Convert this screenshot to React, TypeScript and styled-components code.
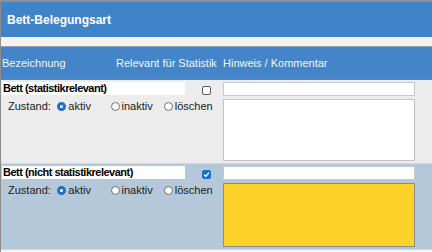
import React, { useState } from 'react';
import styled, { createGlobalStyle } from 'styled-components';

const GlobalStyle = createGlobalStyle`
	html, body {
		margin: 0;
		padding: 0;
		background: #f4f3f2;
		font-family: 'Liberation Sans', Arial, sans-serif;
	}
`;

const Page = styled.div`
	width: 432px;
	height: 252px;
	overflow: hidden;
	border-left: 1px solid #8c8c8c;
	border-top: 2px solid #8a8f95;
	box-sizing: border-box;
	background: #f4f3f2;
`;

const TitleBar = styled.div`
	height: 35px;
	background: #3f84c9;
	color: #fff;
	font-weight: bold;
	font-size: 12px;
	display: flex;
	align-items: center;
	padding-left: 6px;
`;

const Spacer = styled.div`
	height: 9px;
	border-bottom: 1px solid #9aa0a6;
`;

const HeaderRow = styled.div`
	height: 32px;
	background: #4385c8;
	color: #f2f6fb;
	font-size: 11px;
	display: grid;
	grid-template-columns: 114px 98px 1fr;
	align-items: center;
	padding-left: 1px;
	border-bottom: 1px solid #5a86b0;
`;

const HeadCell = styled.div<{ $right?: boolean; $indent?: number }>`
	text-align: ${(p) => (p.$right ? 'right' : 'left')};
	padding-left: ${(p) => p.$indent ?? 0}px;
	white-space: nowrap;
`;

const Row = styled.div<{ $tint: string; $height: number }>`
	height: ${(p) => p.$height}px;
	background: ${(p) => p.$tint};
	display: grid;
	grid-template-columns: 183px 38px 192px;
	grid-template-rows: 14px 1fr;
	row-gap: 3px;
	padding: 2px 0 0 1px;
	box-sizing: border-box;
	border-bottom: 1px solid #d6d6d6;
`;

const NameInput = styled.input`
	all: unset;
	box-sizing: border-box;
	height: 13px;
	background: #fff;
	font-family: 'Liberation Sans', Arial, sans-serif;
	font-weight: bold;
	font-size: 11px;
	letter-spacing: -0.5px;
	color: #000;
	line-height: 13px;
	padding-left: 1px;
`;

const CheckCell = styled.div`
	display: flex;
	justify-content: flex-end;
	align-items: center;
	padding-right: 12px;
	padding-top: 3px;
`;

const Box = styled.span<{ $on: boolean }>`
	width: 9px;
	height: 9px;
	border-radius: 2px;
	box-sizing: border-box;
	border: 1px solid ${(p) => (p.$on ? '#1e6fc9' : '#5a5a5a')};
	background: ${(p) => (p.$on ? '#1e6fc9' : '#fff')};
	display: flex;
	align-items: center;
	justify-content: center;
`;

const CommentInput = styled.div`
	height: 14px;
	box-sizing: border-box;
	background: #fff;
	border: 1px solid #c8c8c8;
`;

const StateLine = styled.div`
	grid-column: 1 / 3;
	display: flex;
	align-items: flex-start;
	font-size: 11px;
	color: #1a1a1a;
	padding-left: 6px;
	padding-top: 1px;
	height: 14px;
`;

const Label = styled.span`
	width: 50px;
`;

const Option = styled.label<{ $w: number }>`
	display: flex;
	align-items: center;
	width: ${(p) => p.$w}px;
	gap: 2px;
`;

const Dot = styled.span<{ $on: boolean }>`
	width: 9px;
	height: 9px;
	border-radius: 50%;
	box-sizing: border-box;
	border: ${(p) => (p.$on ? '3px solid #1f6fc6' : '1px solid #6e6e6e')};
	background: #fff;
`;

const NoteArea = styled.div<{ $fill: string; $edge: string }>`
	grid-column: 3;
	background: ${(p) => p.$fill};
	border: 1px solid ${(p) => p.$edge};
	box-sizing: border-box;
	margin-bottom: 2px;
`;

const Bottom = styled.div`
	background: #f4f3f2;
	height: 4px;
`;

interface Entry {
	name: string;
	relevant: boolean;
	tint: string;
	height: number;
	note: string;
	noteEdge: string;
}

const entries: Entry[] = [
	{ name: 'Bett (statistikrelevant)', relevant: false, tint: '#ececec', height: 84, note: '#fff', noteEdge: '#c4c4c4' },
	{ name: 'Bett (nicht statistikrelevant)', relevant: true, tint: '#b5c8d9', height: 86, note: '#fdd32b', noteEdge: '#8a8a8a' },
];

const Check = () => (
	<svg width="7" height="7" viewBox="0 0 7 7">
		<path d="M1 3.6 L2.8 5.3 L6 1.6" stroke="#fff" strokeWidth="1.3" fill="none" />
	</svg>
);

const EntryRow: React.FC<{ e: Entry }> = ({ e }) => {
	const [state, setState] = useState('aktiv');
	return (
		<Row $tint={e.tint} $height={e.height}>
			<NameInput defaultValue={e.name} />
			<CheckCell>
				<Box $on={e.relevant}>{e.relevant && <Check />}</Box>
			</CheckCell>
			<CommentInput />
			<StateLine>
				<Label>Zustand:</Label>
				{[
					['aktiv', 54],
					['inaktiv', 54],
					['löschen', 60],
				].map(([v, w]) => (
					<Option key={v} $w={w as number} onClick={() => setState(v as string)}>
						<Dot $on={state === v} />
						{v}
					</Option>
				))}
			</StateLine>
			<NoteArea $fill={e.note} $edge={e.noteEdge} />
		</Row>
	);
};

const App: React.FC = () => (
	<Page>
		<GlobalStyle />
		<TitleBar>Bett-Belegungsart</TitleBar>
		<Spacer />
		<HeaderRow>
			<HeadCell>Bezeichnung</HeadCell>
			<HeadCell $right>Relevant für Statistik</HeadCell>
			<HeadCell $indent={9}>Hinweis / Kommentar</HeadCell>
		</HeaderRow>
		{entries.map((e) => (
			<EntryRow key={e.name} e={e} />
		))}
		<Bottom />
	</Page>
);

export default App;
